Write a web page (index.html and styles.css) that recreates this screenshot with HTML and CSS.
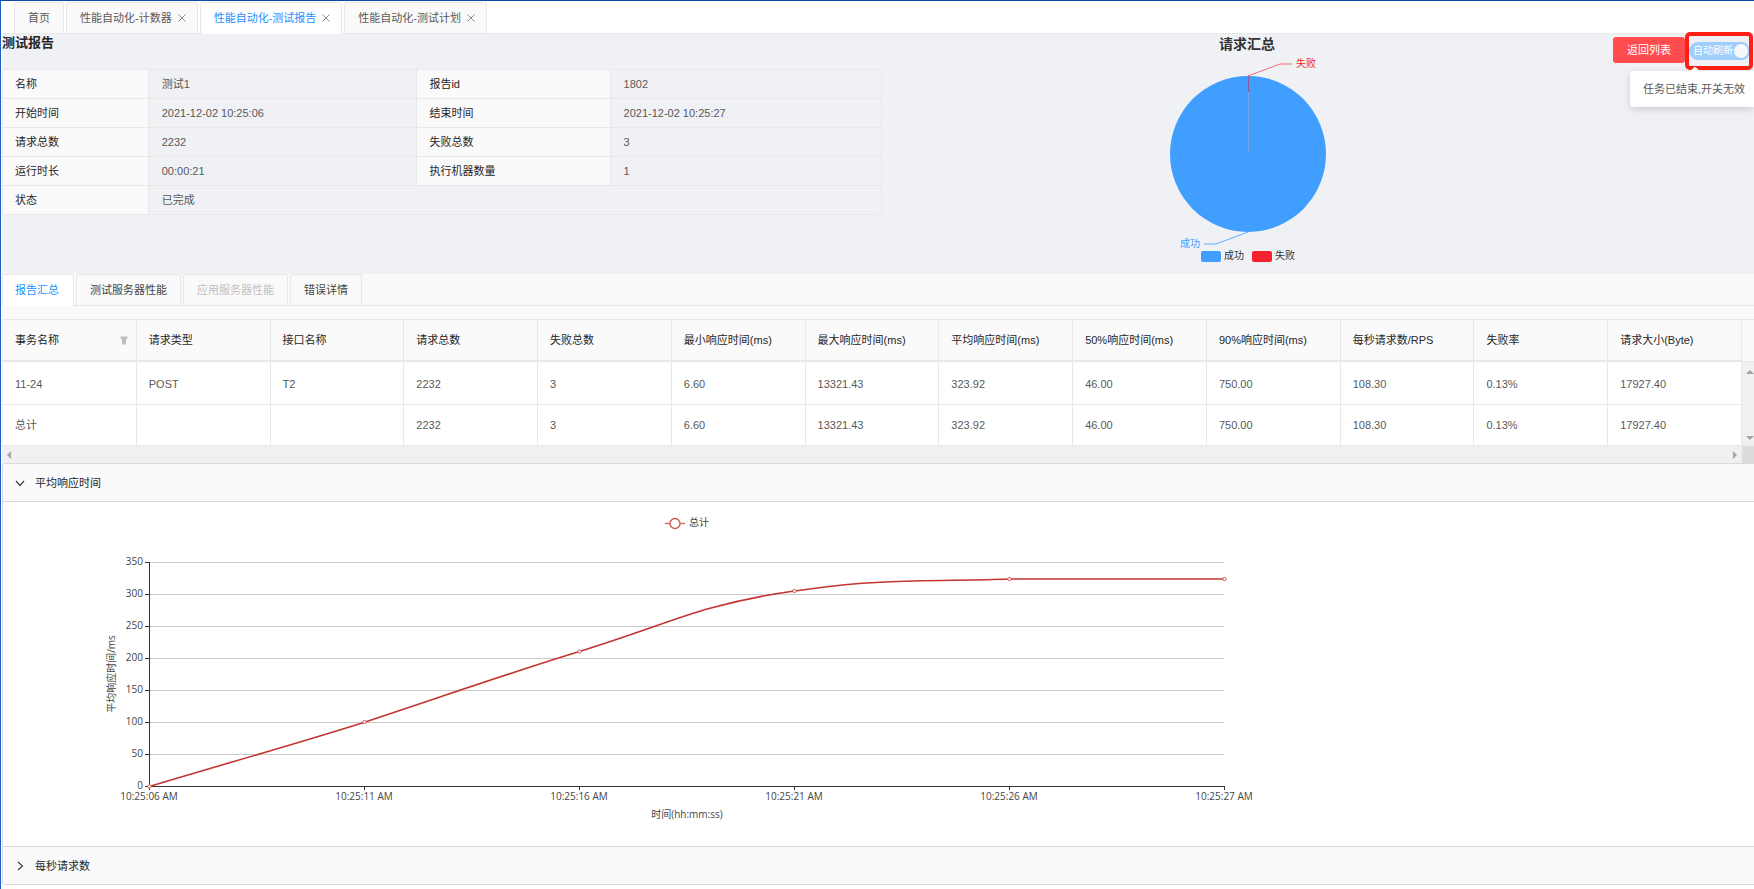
FILE: index.html
```html
<!DOCTYPE html>
<html lang="zh-CN">
<head>
<meta charset="utf-8">
<title>测试报告</title>
<link rel="stylesheet" href="styles.css">
</head>
<body>
<nav class="page-tabs">
  <div class="page-tab page-tab-home"><a href="#home">首页</a></div>
  <div class="page-tab"><a href="#counter">性能自动化-计数器</a><button class="close" aria-label="关闭"><svg viewBox="0 0 8 8"><path d="M.5.5l7 7M7.5.5l-7 7"/></svg></button></div>
  <div class="page-tab active"><a href="#report">性能自动化-测试报告</a><button class="close" aria-label="关闭"><svg viewBox="0 0 8 8"><path d="M.5.5l7 7M7.5.5l-7 7"/></svg></button></div>
  <div class="page-tab"><a href="#plan">性能自动化-测试计划</a><button class="close" aria-label="关闭"><svg viewBox="0 0 8 8"><path d="M.5.5l7 7M7.5.5l-7 7"/></svg></button></div>
</nav>

<section class="summary">
  <div class="info">
    <h1>测试报告</h1>
    <div class="info-box">
      <table class="info-table">
        <colgroup><col class="c1"><col class="c2"><col class="c3"><col class="c4"></colgroup>
        <tr><th>名称</th><td>测试1</td><th>报告id</th><td>1802</td></tr>
        <tr><th>开始时间</th><td>2021-12-02 10:25:06</td><th>结束时间</th><td>2021-12-02 10:25:27</td></tr>
        <tr><th>请求总数</th><td>2232</td><th>失败总数</th><td>3</td></tr>
        <tr><th>运行时长</th><td>00:00:21</td><th>执行机器数量</th><td>1</td></tr>
        <tr><th>状态</th><td colspan="3">已完成</td></tr>
      </table>
    </div>
  </div>
  <div class="pie">
    <svg width="240" height="240" viewBox="0 0 240 240" role="img" aria-label="请求汇总">
      <text class="pie-title" x="119" y="15" text-anchor="middle">请求汇总</text>
      <circle cx="120" cy="120" r="78" fill="#409eff"/>
      <path d="M120.5 42v16" stroke="#8a5a96"/>
      <path d="M120.5 58v60" stroke="#a9a8dc" opacity=".55"/>
      <path d="M120 42l32-12h12" fill="none" stroke="#f5222d" opacity=".65"/>
      <path d="M120 198l-32 12h-12" fill="none" stroke="#409eff" opacity=".8"/>
      <text x="168" y="33" fill="#f5222d">失败</text>
      <text x="52" y="213" fill="#409eff">成功</text>
      <rect x="73" y="217" width="20" height="11" rx="2" fill="#409eff"/>
      <text x="96" y="225" fill="#333">成功</text>
      <rect x="124" y="217" width="20" height="11" rx="2" fill="#f5222d"/>
      <text x="147" y="225" fill="#333">失败</text>
    </svg>
  </div>
  <div class="actions">
    <button class="back">返回列表</button>
    <div class="highlight">
      <label class="switch"><input type="checkbox" checked disabled><span>自动刷新</span><i class="knob"></i></label>
    </div>
    <div class="tooltip" role="tooltip">任务已结束,开关无效</div>
  </div>
</section>

<div class="report-tabs" role="tablist">
  <button class="report-tab active" role="tab">报告汇总</button>
  <button class="report-tab" role="tab">测试服务器性能</button>
  <button class="report-tab" role="tab" disabled>应用服务器性能</button>
  <button class="report-tab" role="tab">错误详情</button>
</div>

<div class="grid-wrap">
  <table class="data">
    <thead>
      <tr><th><div class="th-filter">事务名称<svg width="8" height="9" viewBox="0 0 8 9"><path d="M0 .5h8L6 4.500V8.500H2V4.500z" fill="#bfbfbf"/></svg></div></th><th>请求类型</th><th>接口名称</th><th>请求总数</th><th>失败总数</th><th>最小响应时间(ms)</th><th>最大响应时间(ms)</th><th>平均响应时间(ms)</th><th>50%响应时间(ms)</th><th>90%响应时间(ms)</th><th>每秒请求数/RPS</th><th>失败率</th><th>请求大小(Byte)</th></tr>
    </thead>
    <tbody>
      <tr class="first"><td>11-24</td><td>POST</td><td>T2</td><td>2232</td><td>3</td><td>6.60</td><td>13321.43</td><td>323.92</td><td>46.00</td><td>750.00</td><td>108.30</td><td>0.13%</td><td>17927.40</td></tr>
      <tr><td>总计</td><td></td><td></td><td>2232</td><td>3</td><td>6.60</td><td>13321.43</td><td>323.92</td><td>46.00</td><td>750.00</td><td>108.30</td><td>0.13%</td><td>17927.40</td></tr>
    </tbody>
  </table>
  <div class="vside">
    <div class="vhead"></div>
    <div class="vbar"><i class="arrow up"></i><i class="arrow down"></i></div>
  </div>
  <div class="hbar"><i class="arrow left"></i><i class="arrow right"></i></div>
  <div class="corner"></div>
</div>

<div class="collapse">
  <button class="collapse-head" aria-expanded="true"><svg width="10" height="10" viewBox="0 0 10 10"><path d="M1 3l4 4.500L9 3"/></svg>平均响应时间</button>
  <div class="collapse-body">
    <svg class="chart" viewBox="0 0 1344 344" role="img" aria-label="平均响应时间">
      <path d="M650 21.500h20" stroke="#c23531" stroke-opacity=".7" stroke-width="1.500"/>
      <circle cx="660" cy="21.500" r="5" fill="#fff" stroke="#d05551" stroke-width="1.300"/>
      <text x="674" y="24">总计</text>
      <path d="M134 60.500h1075M134 92.500h1075M134 124.500h1075M134 156.500h1075M134 188.500h1075M134 220.500h1075M134 252.500h1075" stroke="#ccc"/>
      <path d="M134.500 60v225M130 60.500h4M130 92.500h4M130 124.500h4M130 156.500h4M130 188.500h4M130 220.500h4M130 252.500h4M130 284.500h1080M134.500 284v4M349.500 284v4M564.500 284v4M779.500 284v4M994.500 284v4M1209.500 284v4" stroke="#333" fill="none"/>
      <g text-anchor="end">
        <text x="128" y="63">350</text><text x="128" y="95">300</text><text x="128" y="127">250</text><text x="128" y="159">200</text><text x="128" y="191">150</text><text x="128" y="223">100</text><text x="128" y="255">50</text><text x="128" y="287">0</text>
      </g>
      <g text-anchor="middle">
        <text x="134" y="298">10:25:06 AM</text><text x="349" y="298">10:25:11 AM</text><text x="564" y="298">10:25:16 AM</text><text x="779" y="298">10:25:21 AM</text><text x="994" y="298">10:25:26 AM</text><text x="1209" y="298">10:25:27 AM</text>
        <text x="672" y="316">时间(hh:mm:ss)</text>
        <text x="0" y="0" transform="translate(100 172) rotate(-90)">平均响应时间/ms</text>
      </g>
      <path d="M134.500 284.500C199 265 284 241 349.500 220.200C414 199 500 169 564.500 149.500C624 131 660 116 694 106.500C722 99 750 93 779.500 89C808 85 840 81 870 80C910 78 952 78.500 994.500 77H1209.500" fill="none" stroke="#c23531" stroke-width="1.600"/>
      <g fill="#fff" stroke="#d05551"><circle cx="134.500" cy="284.500" r="1.700"/><circle cx="349.500" cy="220" r="1.700"/><circle cx="564.500" cy="149.500" r="1.700"/><circle cx="779.500" cy="89" r="1.700"/><circle cx="994.500" cy="77" r="1.700"/><circle cx="1209.500" cy="77" r="1.700"/></g>
    </svg>
  </div>
  <button class="collapse-head" aria-expanded="false"><svg width="10" height="10" viewBox="0 0 10 10"><path d="M3 1l4.500 4L3 9"/></svg>每秒请求数</button>
</div>
</body>
</html>
```
FILE: styles.css
```css
* { box-sizing: border-box; }
body {
  margin: 0;
  min-height: 100vh;
  padding-left: 1px;
  border-top: 1px solid #0d47a8;
  border-left: 1px solid #1d5cc4;
  background: #fff;
  color: #595959;
  font: 11px/16px "Liberation Sans", "Noto Sans CJK SC", sans-serif;
  overflow-x: hidden;
}
button { font: inherit; color: inherit; margin: 0; cursor: pointer; }
a { color: inherit; text-decoration: none; }

.page-tabs {
  display: flex;
  gap: 2px;
  padding: 1px 0 0 12px;
  border-bottom: 1px solid #e8e8e8;
}
.page-tab {
  display: flex;
  align-items: center;
  gap: 6px;
  height: 31px;
  padding: 0 11px 0 13px;
  border: 1px solid #e8e8e8;
  border-bottom: 0;
  border-radius: 3px 3px 0 0;
  background: #fafafa;
}
.page-tab-home { padding: 0 13px; }
.page-tab.active { height: 32px; margin-bottom: -1px; padding-bottom: 1px; background: #fff; color: #1890ff; }
.close { display: flex; padding: 0; border: 0; background: none; }
.close svg { width: 8px; height: 8px; fill: none; stroke: #8c8c8c; }

.summary {
  display: grid;
  grid-template-columns: 880fr 731fr 141fr;
  height: 240px;
  background: #f0f1f5;
}
h1 {
  margin: 0 0 17px;
  font-size: 13px;
  line-height: 18px;
  color: #262626;
}
.info { min-width: 0; }
.info-box { border: 1px solid #e8e8e8; border-radius: 3px; overflow: hidden; }
.info-table { width: 100%; table-layout: fixed; border-collapse: separate; border-spacing: 0; }
.c1 { width: 16.6%; }
.c2 { width: 30.6%; }
.c3 { width: 22%; }
.info-table th, .info-table td {
  height: 29px;
  padding: 0 12px;
  border-right: 1px solid #e8e8e8;
  border-bottom: 1px solid #e8e8e8;
  font-weight: 400;
  text-align: left;
}
.info-table th { background: #fafafa; color: #262626; }
.info-table td { padding-left: 13px; }
.info-table tr > :last-child { border-right: 0; }
.info-table tr:last-child > * { border-bottom: 0; height: 28px; }

.pie { display: flex; justify-content: center; }
.pie svg { font-size: 10px; font-family: "Noto Sans CJK SC", sans-serif; }
.pie .pie-title { font-size: 14px; font-weight: 700; fill: #333; }

.actions { position: relative; display: flex; align-items: flex-start; }
.back {
  flex: none;
  height: 26px;
  width: 72px;
  margin-top: 3px;
  padding: 0;
  border: 0;
  border-radius: 3px;
  background: #ff4d4f;
  color: #fff;
}
.highlight {
  display: flex;
  align-items: center;
  height: 38px;
  margin-top: -2px;
  border: 4px solid #ff1f14;
  border-radius: 5px;
}
.switch {
  display: flex;
  align-items: center;
  gap: 1px;
  height: 18px;
  padding: 0 1px 0 4px;
  border-radius: 9px 7px 7px 9px;
  background: #9fcefb;
  color: #fff;
  font-size: 10px;
  white-space: nowrap;
}
.switch input { position: absolute; opacity: 0; margin: 0; }
.knob { width: 14px; height: 14px; border-radius: 50%; background: #f6f9fc; }
.tooltip {
  position: absolute;
  top: 37px;
  left: 17px;
  right: 0;
  padding: 10px 0 10px 13px;
  border-radius: 3px 0 0 3px;
  background: #fff;
  box-shadow: 0 2px 7px rgba(0, 0, 0, .16);
  white-space: nowrap;
}
.tooltip::before {
  content: "";
  position: absolute;
  top: -3px;
  left: 61px;
  width: 8px;
  height: 8px;
  border-radius: 2px;
  background: #fff;
  transform: rotate(45deg);
}

.report-tabs {
  display: flex;
  gap: 2px;
  height: 45px;
  background: linear-gradient(#e8e8e8, #e8e8e8) 0 31px / 100% 1px no-repeat #fafafa;
}
.report-tab {
  height: 31px;
  padding: 0 13px;
  border: 1px solid #e8e8e8;
  border-bottom: 0;
  border-radius: 3px 3px 0 0;
  background: #fafafa;
  color: #434343;
}
.report-tab.active { height: 32px; padding: 0 14px 1px 12px; background: #fff; color: #1890ff; }
.report-tab:disabled { color: #bfbfbf; cursor: default; }

.grid-wrap { display: grid; grid-template-columns: minmax(0, 1fr) 12px; }
.data {
  width: 100%;
  table-layout: fixed;
  border-collapse: separate;
  border-spacing: 0;
  border-left: 1px solid #f0f0f0;
}
.data th, .data td {
  height: 41px;
  padding: 0 12px;
  border-right: 1px solid #e8e8e8;
  border-bottom: 1px solid #e8e8e8;
  font-weight: 400;
  text-align: left;
  white-space: nowrap;
}
.data th { height: 43px; background: #fafafa; color: #262626; border-top: 1px solid #e8e8e8; border-bottom-width: 2px; }
.data .first td { height: 43px; padding-top: 1px; }
.th-filter { display: flex; align-items: center; justify-content: space-between; margin-right: -4px; }
.vside { display: flex; flex-direction: column; }
.vhead { height: 43px; border: solid #e8e8e8; border-width: 1px 0; background: #fafafa; }
.vbar { flex: 1; display: flex; flex-direction: column; align-items: flex-end; justify-content: space-between; padding: 8px 0 6px; background: #f0f0f0; overflow: hidden; }
.hbar { height: 17px; display: flex; align-items: center; justify-content: space-between; padding: 0 5px; background: #f0f0f0; }
.corner { background: #dcdcdc; }
.arrow { border: 4px solid transparent; }
.left { border-left: 0; border-right-color: #a3a3a3; }
.right { border-right: 0; border-left-color: #a3a3a3; }
.up { border-top: 0; border-bottom-color: #a3a3a3; }
.down { border-bottom: 0; border-top-color: #a3a3a3; }

.collapse { border: 1px solid #d9d9d9; border-right: 0; border-radius: 3px 0 0 3px; overflow: hidden; }
.collapse-head {
  display: flex;
  align-items: center;
  gap: 10px;
  width: 100%;
  height: 37px;
  padding: 0 12px;
  border: 0;
  background: #fafafa;
  color: #262626;
}
.collapse-head svg { fill: none; stroke: #434343; stroke-width: 1.200; }
.collapse-body { padding: 0 12px; border: solid #d9d9d9; border-width: 1px 0; }
.chart {
  display: block;
  width: 1344px;
  max-width: 100%;
  height: auto;
  font-family: "Open Sans", "Noto Sans CJK SC", sans-serif;
  font-size: 10px;
}
.chart text { fill: #444; }
```
